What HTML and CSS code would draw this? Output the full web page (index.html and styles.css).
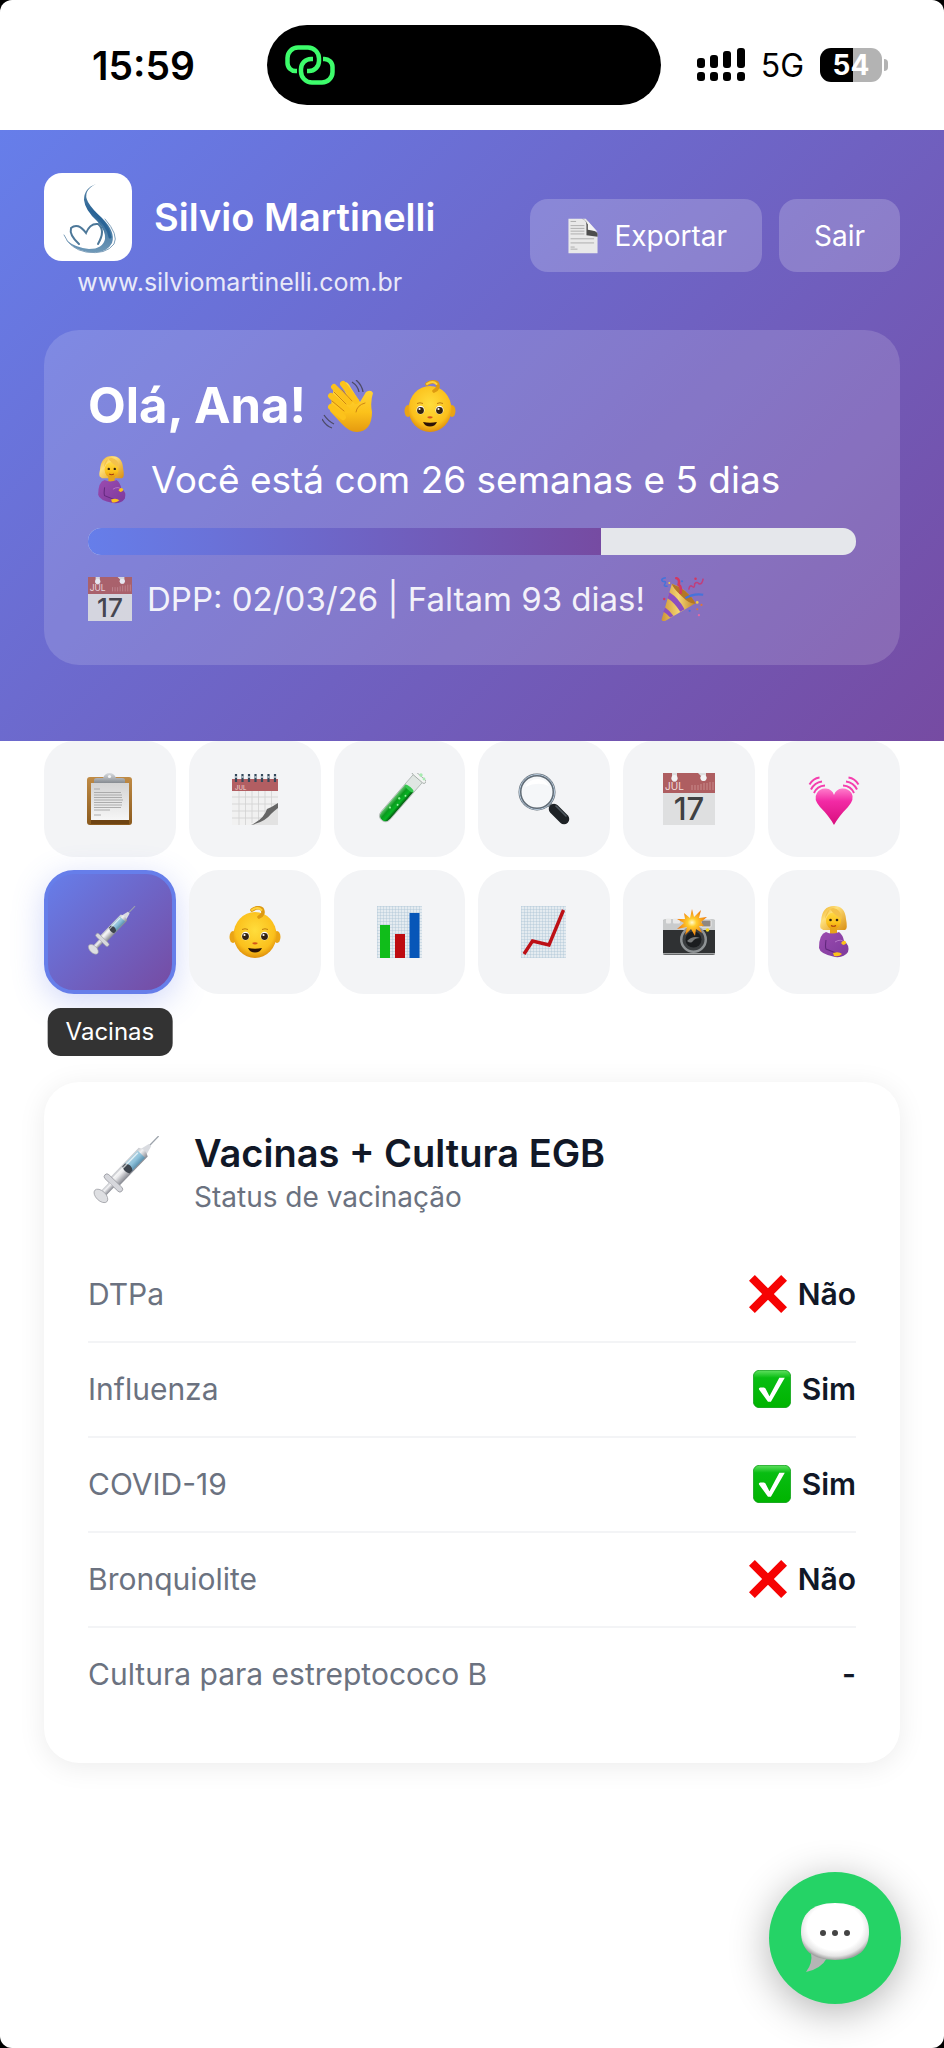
FILE: index.html
```html
<!DOCTYPE html>
<html lang="pt-BR">
  <head>
    <meta charset="UTF-8">
    <meta name="viewport" content="width=device-width, initial-scale=1.0">
    <title>Silvio Martinelli - Vacinas</title>
    <link rel="stylesheet" href="styles.css">
  </head>
  <body>
    <!-- shared icons -->
    <svg class="sprite" aria-hidden="true">
      <defs>
        <linearGradient id="gSkin" x1="0" y1="0" x2="0" y2="1"><stop offset="0" stop-color="#ffd944"/><stop offset="0.6" stop-color="#fcc21b"/><stop offset="1" stop-color="#e59a10"/></linearGradient>
        <linearGradient id="gHair" x1="0" y1="0" x2="1" y2="1"><stop offset="0" stop-color="#e9a820"/><stop offset="0.35" stop-color="#ffe07a"/><stop offset="1" stop-color="#d98e12"/></linearGradient>
        <linearGradient id="gPaper" x1="0" y1="0" x2="0" y2="1"><stop offset="0" stop-color="#d4d4d4"/><stop offset="1" stop-color="#f6f6f6"/></linearGradient>
        <linearGradient id="gBoard" x1="0" y1="0" x2="0" y2="1"><stop offset="0" stop-color="#c08b45"/><stop offset="1" stop-color="#8a5a1e"/></linearGradient>
        <linearGradient id="gClip" x1="0" y1="0" x2="0" y2="1"><stop offset="0" stop-color="#d9dce0"/><stop offset="1" stop-color="#868b91"/></linearGradient>
        <linearGradient id="gTube" x1="0" y1="0" x2="1" y2="0"><stop offset="0" stop-color="#66c070"/><stop offset="0.35" stop-color="#0a9a1e"/><stop offset="0.7" stop-color="#07b423"/><stop offset="1" stop-color="#04540f"/></linearGradient>
        <linearGradient id="gHeart" x1="0" y1="0" x2="0" y2="1"><stop offset="0" stop-color="#ff7ccb"/><stop offset="0.35" stop-color="#f22aa5"/><stop offset="1" stop-color="#d80e7d"/></linearGradient>
        <linearGradient id="gMetal" x1="0" y1="0" x2="1" y2="0"><stop offset="0" stop-color="#c4c6cb"/><stop offset="0.35" stop-color="#f2f2f4"/><stop offset="1" stop-color="#85878f"/></linearGradient>
        <linearGradient id="gDose" x1="0" y1="0" x2="1" y2="0"><stop offset="0" stop-color="#a9cfe0"/><stop offset="0.5" stop-color="#8fc2db"/><stop offset="1" stop-color="#5c92b0"/></linearGradient>
        <linearGradient id="gCheck" x1="0" y1="0" x2="0" y2="1"><stop offset="0" stop-color="#5fe060"/><stop offset="0.2" stop-color="#08bd12"/><stop offset="1" stop-color="#00b400"/></linearGradient>
        <linearGradient id="gLogo" x1="0" y1="0" x2="0" y2="1"><stop offset="0" stop-color="#5d87a8"/><stop offset="0.4" stop-color="#2a6496"/><stop offset="1" stop-color="#6f99b8"/></linearGradient>
        <linearGradient id="gDress" x1="0" y1="0" x2="1" y2="1"><stop offset="0" stop-color="#9b4bb0"/><stop offset="1" stop-color="#7d3a9c"/></linearGradient>
        <linearGradient id="gCone" x1="0" y1="0" x2="1" y2="0"><stop offset="0" stop-color="#d79a25"/><stop offset="0.5" stop-color="#ffdf6a"/><stop offset="1" stop-color="#c98719"/></linearGradient>
        <radialGradient id="gBaby" cx="0.5" cy="0.4" r="0.6"><stop offset="0" stop-color="#ffdd3c"/><stop offset="0.75" stop-color="#fbc01c"/><stop offset="1" stop-color="#df8f0c"/></radialGradient>
        <radialGradient id="gBubble" cx="0.5" cy="0.42" r="0.58"><stop offset="0.7" stop-color="#ffffff"/><stop offset="0.88" stop-color="#e6e6e6"/><stop offset="1" stop-color="#a2a2a2"/></radialGradient>
        <radialGradient id="gFlash"><stop offset="0" stop-color="#fffbd0"/><stop offset="0.3" stop-color="#ffcf30"/><stop offset="1" stop-color="#f07808"/></radialGradient>
        <pattern id="pGrid" width="3" height="3" patternUnits="userSpaceOnUse"><rect width="3" height="3" fill="#e4ebf0"/><path d="M0 0H3M0 0V3" stroke="#a9c3d4" stroke-width="0.8"/></pattern>
      </defs>

      <symbol id="clipboard" viewBox="0 0 52 52">
        <rect x="3" y="4" width="45" height="48" rx="3" fill="url(#gBoard)"/>
        <path d="M7 10H45V47H7z" fill="url(#gPaper)"/>
        <path d="M7 47H45V51H7z" fill="#6e4413"/>
        <path d="M10 10V7Q10 5 13 5H19Q21 0 25.5 0Q30 0 32 5H38Q41 5 41 7V10z" fill="url(#gClip)"/>
        <circle cx="25.5" cy="3.5" r="1.6" fill="#f3f4f6"/>
        <path d="M10 16H16M10 19.5H37M10 22H38M10 24.5H38M10 27H39M10 29.5H38M10 32H38M10 34.5H37M10 37H26M10 42H17" stroke="#a5a5a5" stroke-width="0.9"/>
      </symbol>

      <symbol id="spiral" viewBox="0 0 52 52">
        <path d="M3 6H49V18H3z" fill="#b25e62"/>
        <path d="M3 18H49V34Q40 46 30 52H3z" fill="#f1f1f1"/>
        <path d="M10 18V52M16.5 18V52M23 18V50M29.5 18V48M36 18V42M42.5 18V40M3 24H49M3 31H49M3 38H44M3 45H38" stroke="#d2d2d2" stroke-width="0.8"/>
        <path d="M49 33L49 52H22Q36 48 41 39Q45 37 49 33z" fill="#e2e2e2"/>
        <path d="M49 30Q43 34 38 36Q35 46 22 52Q36 49 42 41Q45 38 49 35z" fill="#666"/>
        <path d="M7 1V9M13.5 1V9M20 1V9M26.5 1V9M33 1V9M39.5 1V9M46 1V9" stroke="#34485a" stroke-width="2.2"/>
        <path d="M6 4H8M12.5 4H14.5M19 4H21M25.5 4H27.5M32 4H34M38.5 4H40.5M45 4H47" stroke="#c9d4dd" stroke-width="1.4"/>
      </symbol>

      <symbol id="tube" viewBox="0 0 52 52">
        <g transform="rotate(41 26 26)">
          <path d="M20 -3H32V47Q32 54 26 54Q20 54 20 47z" fill="#dfe6e2" stroke="#a9b3ae" stroke-width="0.8"/>
          <path d="M20.5 12H31.5V47Q31.5 53.5 26 53.5Q20.5 53.5 20.5 47z" fill="url(#gTube)"/>
          <ellipse cx="26" cy="12" rx="5.500" ry="1.8" fill="#37c850"/>
          <rect x="17.5" y="-5" width="17" height="4" rx="2" fill="#f2f4f3" stroke="#a5aca8" stroke-width="0.9"/>
          <circle cx="28" cy="20" r="1" fill="#9af0a4"/><circle cx="25" cy="26" r="1.2" fill="#8fee9a"/><circle cx="28" cy="32" r="1" fill="#9af0a4"/><circle cx="24" cy="39" r="1.1" fill="#8fee9a"/>
        </g>
        <circle cx="47" cy="2" r="1.7" fill="#a6ebb0"/><circle cx="50" cy="6" r="1.4" fill="#a6ebb0"/>
      </symbol>

      <symbol id="magnifier" viewBox="0 0 52 52">
        <path d="M31 31L35 35" stroke="#8b9299" stroke-width="5"/>
        <path d="M36 36L46 46" stroke="#1e2226" stroke-width="10.5" stroke-linecap="round"/>
        <path d="M38 33L48 43" stroke="#525a61" stroke-width="1.6" stroke-linecap="round"/>
        <circle cx="19" cy="19" r="17" fill="#f5f7f9" stroke="#5f6a74" stroke-width="3"/>
        <circle cx="19" cy="19" r="17.5" fill="none" stroke="#b9cbdc" stroke-width="1"/>
        <path d="M7 14Q11 6 20 6Q27 6 31 13Q20 8 7 14z" fill="#fff"/>
      </symbol>

      <symbol id="calendar" viewBox="0 0 52 52">
        <rect width="52" height="52" fill="#dedfe0"/>
        <path d="M0 0H9V4A3 3 0 1 0 14 4V0H35L38 3A3 3 0 1 0 43 3V0H52V20H0z" fill="#ae5e61"/>
        <circle cx="11.5" cy="5" r="3" fill="#f3f4f6"/><circle cx="40.5" cy="5" r="3" fill="#f3f4f6"/>
        <path d="M29 12V17M32 12V17M35 12V17M38 11V17M41 10V17M44 10V17M47 9V17M50 9V17" stroke="#c98a8c" stroke-width="1"/>
      </symbol>

      <symbol id="heart" viewBox="0 0 52 52">
        <path d="M26 52Q21 43 12 34Q5 26 9 20Q12 15 18 15.5Q24 16 26 22Q28 16 34 15.5Q40 15 43.5 20Q47 26 40 34Q31 43 26 52z" fill="url(#gHeart)"/>
        <path d="M1.5 11.5Q5 5.5 11.5 4.5M3 16.5Q6.5 9.5 14 8.5M6 20Q9 13 17 12.5M50.5 11.5Q47 5.5 40.5 4.5M49 16.5Q45.5 9.5 38 8.5M46 20Q43 13 35 12.5" fill="none" stroke="#f43fae" stroke-width="2"/>
      </symbol>

      <symbol id="syringe" viewBox="0 0 52 52">
        <g transform="rotate(44 26 26)">
          <path d="M26 -10V6" stroke="#9da3ab" stroke-width="1"/>
          <path d="M24.8 -1H27.2L29 6H23z" fill="#d9dbe0"/>
          <path d="M21.5 6Q26 3 30.5 6V36H21.5z" fill="url(#gMetal)"/>
          <path d="M22.3 8H29.7V22H22.3z" fill="url(#gDose)"/>
          <path d="M22.3 21Q26 18 29.7 21V24Q26 26 22.3 24z" fill="#3d444d"/>
          <path d="M23.5 9V35" stroke="#fff" stroke-width="1" opacity="0.7"/>
          <rect x="17.5" y="35" width="17" height="4" rx="2" fill="#d6d7dc" stroke="#9a9ba2" stroke-width="0.6"/>
          <rect x="23.5" y="39" width="5" height="8" fill="url(#gMetal)"/>
          <ellipse cx="26" cy="50" rx="6" ry="3.5" fill="#dedfe2" stroke="#a3a4aa" stroke-width="0.6"/>
        </g>
      </symbol>

      <symbol id="baby" viewBox="0 0 52 52">
        <ellipse cx="4" cy="31" rx="3.5" ry="6" fill="#eaa414"/><ellipse cx="48" cy="31" rx="3.5" ry="6" fill="#eaa414"/>
        <ellipse cx="26" cy="29" rx="21.5" ry="23" fill="url(#gBaby)"/>
        <path d="M23 4Q29 0 33 3Q36 8 30 11" fill="none" stroke="#dd9a12" stroke-width="3.6" stroke-linecap="round"/>
        <path d="M23 4Q29 0 32.5 4" fill="none" stroke="#ffd23c" stroke-width="2" stroke-linecap="round"/>
        <ellipse cx="16.5" cy="30" rx="4" ry="4.3" fill="#fff"/><ellipse cx="35.5" cy="30" rx="4" ry="4.3" fill="#fff"/>
        <circle cx="16.5" cy="30.5" r="3.4" fill="#33220f"/><circle cx="35.5" cy="30.5" r="3.4" fill="#33220f"/>
        <circle cx="15.5" cy="29" r="1.1" fill="#fff"/><circle cx="34.5" cy="29" r="1.1" fill="#fff"/>
        <path d="M13 23.5Q16 22 19 23.5M33 23.5Q36 22 39 23.5" fill="none" stroke="#b8730c" stroke-width="0.9"/>
        <path d="M23 37Q26 40 29 37Q26 35.5 23 37z" fill="#d4551a"/>
        <path d="M19 42Q26 43.5 33 42Q31 46.5 26 46.5Q21 46.5 19 42z" fill="#2b1206"/>
      </symbol>

      <symbol id="bars" viewBox="0 0 52 52">
        <rect x="3" width="45" height="52" fill="url(#pGrid)"/>
        <path d="M6 19H16V52H6z" fill="#10bd1a"/><path d="M21 28H31V52H21z" fill="#bd0b10"/><path d="M35.5 7H45.5V52H35.5z" fill="#0756b8"/>
      </symbol>

      <symbol id="trend" viewBox="0 0 52 52">
        <rect x="3" width="45" height="52" fill="url(#pGrid)"/>
        <path d="M6 48L14.5 35L31 39L45.5 4" fill="none" stroke="#bd1016" stroke-width="3.4"/>
      </symbol>

      <symbol id="camera" viewBox="0 0 52 52">
        <rect y="14" width="52" height="35" rx="2" fill="#2f3133"/>
        <path d="M0 15Q0 13 2 13H50Q52 13 52 15V24H0z" fill="#c9cbcc"/>
        <rect x="3" y="12.5" width="5" height="5" rx="1" fill="#e9e9e9"/><rect x="10" y="12.5" width="7" height="5" rx="1" fill="#e9e9e9"/>
        <rect x="38" y="14" width="10" height="7" rx="1" fill="#8f8781" stroke="#ececec"/>
        <path d="M0 47H52V48.5H0z" fill="#a2a4a5"/>
        <circle cx="30.5" cy="33.5" r="13.5" fill="#8f9395"/><circle cx="30.5" cy="33.5" r="11" fill="#3b3e40"/><circle cx="30.5" cy="33.5" r="8" fill="#1b1d1f"/>
        <path d="M24 35Q30 29 37 32Q32 32 30 35Q28 38 24 35z" fill="#77797a"/>
        <circle cx="44.5" cy="24" r="1.8" fill="#f5d41a"/>
        <path d="M29 3L31 11L38 4L36 12L44 11L38 16L41 20L36 20L39 27L33 23L32 30L28 23L22 29L24 21L14 23L21 17L14 13L22 13L21 7L27 12z" fill="url(#gFlash)"/>
      </symbol>

      <symbol id="pregnant" viewBox="0 0 52 52">
        <path d="M14 23Q11 23 13 15Q14 0 26 0Q37 0 38 13Q40 23 37 24H15z" fill="url(#gHair)"/>
        <ellipse cx="25.5" cy="15" rx="7.5" ry="8.5" fill="url(#gSkin)"/>
        <path d="M17 13Q19 9 22 3Q26 9 34 13Q33 3 25 2Q18 3 17 13z" fill="#f4c24a"/>
        <circle cx="22.5" cy="14" r="1.3" fill="#33220f"/><circle cx="29" cy="14" r="1.3" fill="#33220f"/>
        <path d="M23 19.5Q25.5 21 28 19.5" fill="none" stroke="#a63a12" stroke-width="1.2"/>
        <path d="M22 22H29V28H22z" fill="#e6a31b"/>
        <path d="M18 26Q24 29 31 26Q35 29 36 35Q42 39 40 46Q36 52 27 51Q12 48 11 42Q11 28 18 26z" fill="url(#gDress)"/>
        <path d="M18 34Q17 41 18 43L28 47" fill="none" stroke="#62287d" stroke-width="1.1"/>
        <path d="M27 36Q33 32 37 37" fill="none" stroke="#b678c9" stroke-width="1"/>
        <path d="M33 37Q36 33 38 36Q39 38 35 39z" fill="#fcc21b"/>
        <path d="M25 47Q31 45 34 48Q31 51 26 50z" fill="#fcc21b"/>
      </symbol>

      <symbol id="wave" viewBox="0 0 52 52">
        <path d="M12 5L26 19L20 4Q25 -1 29 8L38 22L44 12Q49 9 51 13Q48 22 50 32Q50 51 35 52Q27 52 19 43L8 31L9 25z" fill="url(#gSkin)"/>
        <path d="M12 7L27 22M21 4L34 21M9 16L25 30M9 27L21 37" fill="none" stroke="#fcc21b" stroke-width="6" stroke-linecap="round"/>
        <path d="M12 12L24 24M20 10L30 21M10 21L22 31M43 23Q35 25 34 32" fill="none" stroke="#cf8612" stroke-width="1" stroke-linecap="round"/>
        <path d="M34 0Q40 5 41 12M30 2Q36 6 37 12M2 35Q6 41 12 44M0 39Q4 46 10 48" fill="none" stroke="#4c4a66" stroke-width="1.3"/>
      </symbol>

      <symbol id="party" viewBox="0 0 52 52">
        <path d="M2 50L14 8Q32 14 42 31L6 52Q2 53 2 50z" fill="url(#gCone)"/>
        <path d="M11 18Q22 25 29 38L24 41Q17 30 9 25zM6 36Q12 40 16 46L12 48Q8 43 4 41z" fill="#8d4cc0"/>
        <path d="M14 8Q32 14 42 31Q36 33 26 23Q15 13 14 8z" fill="#b87715"/>
        <path d="M18 1Q24 2 22 9Q26 12 24 20" fill="none" stroke="#dd3256" stroke-width="3"/>
        <path d="M30 25Q40 19 51 21" fill="none" stroke="#3f74dd" stroke-width="2.6"/>
        <path d="M7 1Q0 2 3 5Q8 5 6 8Q3 11 9 11" fill="none" stroke="#3f74dd" stroke-width="1.8"/>
        <path d="M34 15Q35 9 38 11Q41 14 41 8Q44 5 46 8Q50 9 51 2" fill="none" stroke="#c73a76" stroke-width="1.8"/>
        <circle cx="26" cy="5" r="1.3" fill="#3f74dd"/><circle cx="42" cy="2" r="1.5" fill="#dd3256"/><circle cx="5" cy="26" r="1.4" fill="#dd3256"/><circle cx="44" cy="30" r="1.6" fill="#ffd43c"/><circle cx="49" cy="33" r="1.3" fill="#e77531"/><circle cx="35" cy="40" r="1.3" fill="#3f74dd"/><circle cx="46" cy="45" r="1.4" fill="#eb6aa4"/><circle cx="11" cy="7" r="1.2" fill="#ffd43c"/><circle cx="44" cy="38" r="1.2" fill="#e77531"/>
      </symbol>

      <symbol id="page" viewBox="0 0 52 52">
        <path d="M5 1H30L47 22V51H5z" fill="#e9e9e9"/>
        <path d="M24 1Q31 2 31 10V25L47 27V22L32 8Q29 1 24 1z" fill="#4d4d4d"/>
        <path d="M30 1Q33 3 33 9V17Q38 18 47 20z" fill="#f4f4f4"/>
        <path d="M8 5H16M8 11H28M8 15H28M8 19H28M8 23H28M8 30H42M8 36H42M8 42H14M8 45H18" stroke="#a9a9a9" stroke-width="1.3"/>
      </symbol>

      <symbol id="cross" viewBox="0 0 52 52"><path d="M8 0L26 18L44 0L52 8L34 26L52 44L44 52L26 34L8 52L0 44L18 26L0 8z" fill="#f60303"/></symbol>
      <symbol id="check" viewBox="0 0 52 52">
        <rect x="0.5" y="0.5" width="51" height="51" rx="8" fill="url(#gCheck)" stroke="#079a10"/>
        <path d="M8.5 27Q7 25 10 24H15Q17 24 18.5 28L22.5 36L36 10.5H43.5L24.5 43.5H20.5z" fill="#fff"/>
      </symbol>
    </svg>

    <div class="app">
      <div class="status-bar">
        <span class="clock">15:59</span>
        <div class="island">
          <svg width="50" height="40" viewBox="0 0 50 40" fill="none" stroke="#3dfc6b" stroke-width="4.5">
            <path d="M12 26H11A8 8 0 0 1 2.500 18V13A10.5 10.5 0 0 1 13 2.500H23A11 11 0 0 1 34 13.5V16A10 10 0 0 1 24 26H22"/>
            <path d="M38 14H39A8 8 0 0 1 47.5 22V27A10.5 10.5 0 0 1 37 37.5H27A11 11 0 0 1 16 26.5V24A10 10 0 0 1 26 14H28"/>
          </svg>
        </div>
        <div class="signal">
          <svg width="48" height="34" viewBox="0 0 48 34">
            <rect x="0" y="10" width="8" height="10" rx="3"/><rect x="13" y="7" width="8" height="13" rx="3"/><rect x="26" y="3" width="8" height="17" rx="3"/><rect x="40" y="0" width="8" height="20" rx="3"/>
            <rect x="0" y="24" width="8" height="9" rx="3"/><rect x="13" y="24" width="8" height="9" rx="3"/><rect x="26" y="24" width="8" height="9" rx="3"/><rect x="40" y="24" width="8" height="9" rx="3"/>
          </svg>
          <span>5G</span>
          <span class="battery">54</span>
        </div>
      </div>

      <header class="header">
        <div class="top-row">
          <div class="brand">
            <div class="brand-name">
              <div class="logo">
                <svg width="88" height="88" viewBox="0 0 88 88" fill="none" stroke-linecap="round">
                  <path d="M52 11Q38 18 44 29Q48 36 58 45Q72 59 68 70Q62 82 43 79Q29 76 22 67Q32 75 45 76Q59 76 61 66Q62 58 53 48Q41 37 40 27Q40 15 52 11z" fill="url(#gLogo)"/>
                  <path d="M50 40Q64 52 66 64" stroke="#2a6496" stroke-width="3"/>
                  <path d="M61 46Q75 62 70 71Q62 82 42 79Q26 76 20 62" stroke="#7e9fba" stroke-width="1"/>
                  <path d="M35 71Q25 62 27 55Q34 49 42 60Q46 50 54 51Q62 57 54 71" stroke="#4d7899" stroke-width="2"/>
                </svg>
              </div>
              <h1>Silvio Martinelli</h1>
            </div>
            <a class="site" href="#">www.silviomartinelli.com.br</a>
          </div>
          <div class="actions">
            <button class="btn" type="button"><svg class="icon-md" aria-hidden="true"><use href="#page"/></svg>Exportar</button>
            <button class="btn" type="button">Sair</button>
          </div>
        </div>

        <section class="welcome">
          <h2>Olá, Ana! <svg class="icon-lg" aria-hidden="true"><use href="#wave"/></svg><svg class="icon-lg" aria-hidden="true"><use href="#baby"/></svg></h2>
          <p class="weeks"><svg class="icon-lg" aria-hidden="true"><use href="#pregnant"/></svg>Você está com 26 semanas e 5 dias</p>
          <div class="progress" role="progressbar" aria-label="Progresso da gestação" aria-valuenow="67" aria-valuemin="0" aria-valuemax="100">
            <div class="progress-fill" style="width: 66.8%"></div>
          </div>
          <p class="due">
            <svg class="icon-md" viewBox="0 0 52 52" aria-hidden="true">
              <use href="#calendar"/>
              <text x="2" y="17" class="ink-light" font-size="10">JUL</text>
              <text x="26" y="47" class="ink-dark" font-size="31" text-anchor="middle">17</text>
            </svg>
            DPP: 02/03/26 | Faltam 93 dias!
            <svg class="icon-md" aria-hidden="true"><use href="#party"/></svg>
          </p>
        </section>
      </header>

      <nav class="tabs">
        <button class="tab" type="button" aria-label="Dados"><svg><use href="#clipboard"/></svg></button>
        <button class="tab" type="button" aria-label="Consultas">
          <svg viewBox="0 0 52 52">
            <use href="#spiral"/>
            <text x="6" y="17" class="ink-light" font-size="6">JUL</text>
          </svg>
        </button>
        <button class="tab" type="button" aria-label="Exames"><svg><use href="#tube"/></svg></button>
        <button class="tab" type="button" aria-label="Ultrassom"><svg><use href="#magnifier"/></svg></button>
        <button class="tab" type="button" aria-label="Agenda">
          <svg viewBox="0 0 52 52">
            <use href="#calendar"/>
            <text x="2" y="17" class="ink-light" font-size="10">JUL</text>
            <text x="26" y="47" class="ink-dark" font-size="31" text-anchor="middle">17</text>
          </svg>
        </button>
        <button class="tab" type="button" aria-label="Pressão"><svg><use href="#heart"/></svg></button>
        <button class="tab active" type="button"><svg aria-hidden="true"><use href="#syringe"/></svg><span class="tooltip">Vacinas</span></button>
        <button class="tab" type="button" aria-label="Bebê"><svg><use href="#baby"/></svg></button>
        <button class="tab" type="button" aria-label="Medidas"><svg><use href="#bars"/></svg></button>
        <button class="tab" type="button" aria-label="Peso"><svg><use href="#trend"/></svg></button>
        <button class="tab" type="button" aria-label="Fotos"><svg><use href="#camera"/></svg></button>
        <button class="tab" type="button" aria-label="Gestação"><svg><use href="#pregnant"/></svg></button>
      </nav>

      <main class="card">
        <div class="card-head">
          <svg class="card-icon" aria-hidden="true"><use href="#syringe"/></svg>
          <div>
            <h2>Vacinas + Cultura EGB</h2>
            <p>Status de vacinação</p>
          </div>
        </div>
        <table class="vaccines">
          <tr><th scope="row">DTPa</th><td><svg aria-hidden="true"><use href="#cross"/></svg>Não</td></tr>
          <tr><th scope="row">Influenza</th><td><svg aria-hidden="true"><use href="#check"/></svg>Sim</td></tr>
          <tr><th scope="row">COVID-19</th><td><svg aria-hidden="true"><use href="#check"/></svg>Sim</td></tr>
          <tr><th scope="row">Bronquiolite</th><td><svg aria-hidden="true"><use href="#cross"/></svg>Não</td></tr>
          <tr><th scope="row">Cultura para estreptococo B</th><td>-</td></tr>
        </table>
      </main>

      <button class="chat" type="button" aria-label="Conversar">
        <svg width="68" height="70" viewBox="0 0 68 70">
          <path d="M10 50Q12 60 5 69Q20 66 26 55z" fill="#b5b5b5"/>
          <path d="M34 0C58 0 68 12 68 29C68 46 58 57 34 57C10 57 0 46 0 29C0 12 10 0 34 0z" fill="url(#gBubble)"/>
          <circle cx="22" cy="30" r="3" fill="#444"/><circle cx="34" cy="30" r="3" fill="#444"/><circle cx="46" cy="30" r="3" fill="#444"/>
        </svg>
      </button>
    </div>
  </body>
</html>
```
FILE: styles.css
```css
* {
  box-sizing: border-box;
  margin: 0;
  padding: 0;
}

html {
  background: #000;
}

body {
  font-family: Inter, "Liberation Sans", sans-serif;
  color: #111827;
}

button {
  border: none;
  font-family: inherit;
  cursor: pointer;
}

.app {
  min-height: 100vh;
  background: #fff;
  border-radius: 12px;
  overflow: hidden;
}

.sprite {
  position: absolute;
  width: 0;
  height: 0;
}

.ink-light {
  fill: #f3dede;
}

.ink-dark {
  fill: #3f4042;
  font-weight: 500;
}

/* phone status bar */
.status-bar {
  display: grid;
  grid-template-columns: 267fr 394px 283fr;
  align-items: center;
  height: 130px;
  color: #000;
}

.clock {
  padding-left: 20px;
  text-align: center;
  font-size: 39px;
  font-weight: 600;
}

.island {
  display: flex;
  align-items: center;
  height: 80px;
  padding-left: 18px;
  background: #000;
  border-radius: 40px;
}

.signal {
  display: flex;
  align-items: center;
  justify-content: flex-end;
  gap: 16px;
  padding-right: 62px;
  font-size: 32px;
}

.battery {
  position: relative;
  width: 62px;
  height: 34px;
  line-height: 34px;
  text-align: center;
  color: #fff;
  font-size: 28px;
  font-weight: 700;
  border-radius: 11px;
  background: linear-gradient(90deg, #000 54%, #b3b3b3 54%);
}

.battery::after {
  content: "";
  position: absolute;
  left: 64px;
  top: 11px;
  width: 4px;
  height: 12px;
  background: #b3b3b3;
  border-radius: 0 4px 4px 0;
}

/* header */
.header {
  padding: 43px 44px 76px;
  color: #fff;
  background: linear-gradient(135deg, #667eea 0%, #764ba2 100%);
}

.top-row {
  display: flex;
  align-items: center;
  justify-content: space-between;
  margin-bottom: 32px;
}

.brand {
  display: flex;
  flex-direction: column;
  align-items: center;
  gap: 5px;
}

.brand-name {
  display: flex;
  align-items: center;
  gap: 22px;
}

.brand-name h1 {
  font-size: 38px;
  font-weight: 600;
}

.logo {
  width: 88px;
  height: 88px;
  background: #fff;
  border-radius: 18px;
}

.site {
  color: #fff;
  opacity: 0.85;
  font-size: 25px;
  line-height: 32px;
  text-decoration: none;
}

.actions {
  display: flex;
  gap: 17px;
}

.btn {
  display: flex;
  align-items: center;
  gap: 13px;
  height: 73px;
  padding: 0 35px;
  color: #fff;
  font-size: 28px;
  border-radius: 18px;
  background: rgba(255, 255, 255, 0.2);
}

.btn .icon-md {
  width: 36px;
  height: 36px;
}

.welcome {
  padding: 44px;
  border-radius: 35px;
  background: rgba(255, 255, 255, 0.15);
}

.welcome h2,
.weeks,
.due {
  display: flex;
  align-items: center;
}

.welcome h2 {
  margin-bottom: 17px;
  font-size: 49px;
  line-height: 64px;
  font-weight: 700;
}

.welcome h2 .icon-lg {
  margin-left: 16px;
  margin-right: 14px;
}

.weeks {
  gap: 15px;
  margin-bottom: 23px;
  font-size: 37px;
  line-height: 50px;
}

.due {
  gap: 15px;
  font-size: 33px;
  line-height: 44px;
  opacity: 0.9;
}

.icon-lg {
  width: 52px;
  height: 52px;
}

.icon-md {
  width: 44px;
  height: 44px;
}

.weeks .icon-lg {
  width: 48px;
  height: 48px;
}

.progress {
  height: 27px;
  margin-bottom: 22px;
  overflow: hidden;
  border-radius: 13px;
  background: #e5e7eb;
}

.progress-fill {
  height: 100%;
  background: linear-gradient(90deg, #667eea, #764ba2);
}

/* tabs */
.tabs {
  display: grid;
  grid-template-columns: repeat(6, 1fr);
  gap: 13px;
  padding: 0 44px;
}

.tab {
  position: relative;
  display: flex;
  align-items: center;
  justify-content: center;
  padding: 32px 0;
  border-radius: 30px;
  background: #f3f4f6;
}

.tab svg {
  width: 52px;
  height: 52px;
}

.tab.active {
  border: 4px solid #667eea;
  background: linear-gradient(135deg, #667eea, #764ba2);
  box-shadow: 0 8px 32px rgba(102, 126, 234, 0.3);
}

.tooltip {
  position: absolute;
  top: 134px;
  left: 50%;
  transform: translateX(-50%);
  padding: 0 18px;
  color: #fff;
  font-size: 24px;
  line-height: 48px;
  border-radius: 13px;
  background: #333;
}

/* vaccines card */
.card {
  margin: 88px 44px 0;
  padding: 46px 44px 42px;
  border-radius: 35px;
  background: #fff;
  box-shadow: 0 4px 28px rgba(0, 0, 0, 0.08);
}

.card-head {
  display: flex;
  align-items: center;
  gap: 34px;
  margin-bottom: 32px;
}

.card-icon {
  width: 72px;
  height: 72px;
}

.card-head h2 {
  font-size: 38px;
  line-height: 50px;
  font-weight: 600;
}

.card-head p {
  color: #6b7280;
  font-size: 28px;
  line-height: 38px;
}

.vaccines {
  width: 100%;
  border-collapse: collapse;
  font-size: 30px;
  line-height: 45px;
}

.vaccines tr {
  border-bottom: 2px solid #f3f4f6;
}

.vaccines tr:last-child {
  border-bottom: none;
}

.vaccines th {
  padding: 24px 0;
  text-align: left;
  font-weight: 400;
  color: #6b7280;
}

.vaccines td {
  text-align: right;
  font-weight: 600;
}

.vaccines svg {
  width: 38px;
  height: 38px;
  margin-right: 11px;
  vertical-align: -8px;
}

.chat {
  position: fixed;
  right: 43px;
  bottom: 44px;
  display: flex;
  align-items: center;
  justify-content: center;
  width: 132px;
  height: 132px;
  border-radius: 50%;
  background: #25d366;
  box-shadow: 0 8px 40px rgba(0, 0, 0, 0.3);
}
```
